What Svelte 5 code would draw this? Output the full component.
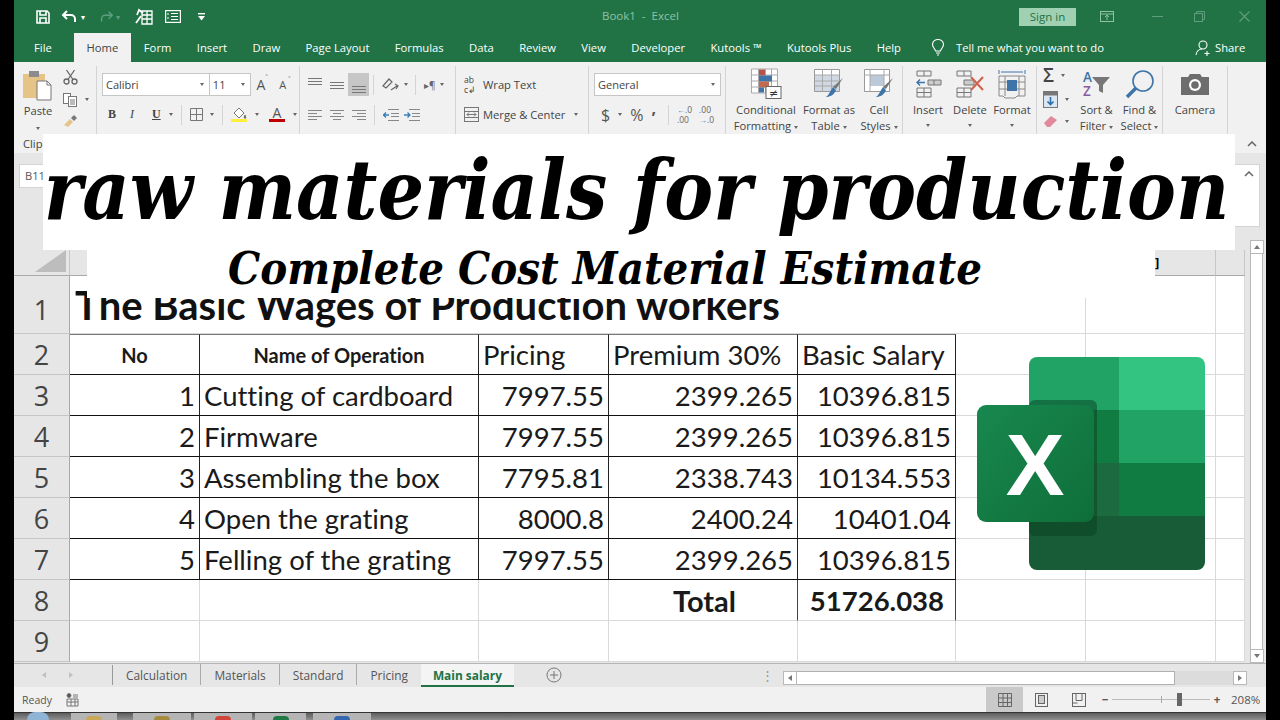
<script>
  const tabs = ['Form','Insert','Draw','Page Layout','Formulas','Data','Review','View','Developer','Kutools ™','Kutools Plus','Help'];
  const sheets = ['Calculation','Materials','Standard','Pricing'];
  const colHeads = ['A','B','C','D','E','F','G','H'];
  const rows = [
    ['1','Cutting of cardboard','7997.55','2399.265','10396.815'],
    ['2','Firmware','7997.55','2399.265','10396.815'],
    ['3','Assembling the box','7795.81','2338.743','10134.553'],
    ['4','Open the grating','8000.8','2400.24','10401.04'],
    ['5','Felling of the grating','7997.55','2399.265','10396.815']
  ];
</script>

<div class="screen">
  <div class="window">
    <header class="titlebar">
      <div class="qat">
        <svg width="16" height="16" viewBox="0 0 16 16" fill="none" stroke="#fff" stroke-width="1.6"><path d="M2 2h10l2 2v10H2z"/><path d="M5 2v4h6V2M5 14V9h6v5"/></svg>
        <svg class="q-undo" width="18" height="14" viewBox="0 0 18 14" fill="none" stroke="#fff" stroke-width="2"><path d="M6 1 2 5l4 4M2 5h8a4 4 0 0 1 4 4v3"/></svg>
        <span class="mini">▾</span>
        <svg class="q-redo" width="16" height="14" viewBox="0 0 18 14" fill="none" stroke="#5f9f80" stroke-width="1.6"><path d="M12 1l4 4-4 4M16 5H8a4 4 0 0 0-4 4v3"/></svg>
        <span class="mini dim">▾</span>
        <svg class="q-form" width="18" height="17" viewBox="0 0 18 17" fill="none" stroke="#fff" stroke-width="1.3"><path d="M7 3h10v13H7zM7 7h10M7 11h10M12 3v13"/><path d="M1 15 6 8M2 7l2-5 4 3" stroke-width="1.8"/></svg>
        <svg class="q-view" width="16" height="13" viewBox="0 0 16 13" fill="none" stroke="#fff" stroke-width="1.2"><rect x=".6" y=".6" width="14.8" height="11.8"/><path d="M6 3.5h7M6 6.5h7M6 9.5h7M2 4h2M2 8h2"/></svg>
        <svg class="q-more" width="7" height="8" viewBox="0 0 7 8" fill="#fff"><rect width="7" height="1.4"/><path d="M0 3h7L3.500 7.500z"/></svg>
      </div>
      <div class="doc">Book1&nbsp; -&nbsp; Excel</div>
      <div class="winctl">
        <span class="signin">Sign in</span>
        <svg width="14" height="11" viewBox="0 0 14 11" fill="none" stroke="#8fc2a5"><rect x=".5" y=".5" width="13" height="10"/><path d="M.5 3h13M7 9V4.500M5 6l2-2 2 2"/></svg>
        <svg class="w-min" width="11" height="2" viewBox="0 0 11 2"><rect width="11" height="1" fill="#5f9f80"/></svg>
        <svg class="w-max" width="11" height="11" viewBox="0 0 11 11" fill="none" stroke="#5f9f80"><rect x=".5" y="2.500" width="8" height="8"/><path d="M2.500 2.500v-2h8v8h-2"/></svg>
        <svg class="w-x" width="11" height="11" viewBox="0 0 11 11" stroke="#5f9f80" stroke-width="1.1"><path d="M.5.5l10 10M10.500.5l-10 10"/></svg>
      </div>
    </header>

    <nav class="tabbar">
      <span class="tab file">File</span>
      <span class="tab home">Home</span>
      {#each tabs as t}<span class="tab">{t}</span>{/each}
      <span class="tell">
        <svg width="14" height="17" viewBox="0 0 14 17" fill="none" stroke="#fff" stroke-width="1.1"><path d="M4.500 12C4 9.500 1.500 8.500 1.500 5.500a5.500 5 0 0 1 11 0c0 3-2.500 4-3 6.500zM5 14h4M6 16h2"/></svg>
        Tell me what you want to do
      </span>
      <span class="share">
        <svg width="17" height="16" viewBox="0 0 17 16" fill="none" stroke="#fff" stroke-width="1.1"><circle cx="8" cy="5" r="4"/><path d="M1 15c.5-3.500 3-6 6-6M12 11v5M9.500 13.500h5"/></svg>
        Share
      </span>
    </nav>

    <section class="ribbon">
      <div class="groups">
        <div class="group g-clip">
          <div class="big paste">
            <svg width="30" height="32" viewBox="0 0 30 32"><rect x="0" y="4" width="22" height="24" fill="#e6c488"/><rect x="6" y="1" width="10" height="6" fill="#8c8c8c"/><path d="M14 11h10l4 4v15H14z" fill="#fff" stroke="#777"/><path d="M24 11v4h4" fill="none" stroke="#777"/></svg>
            <span>Paste</span>
            <i class="chev"></i>
          </div>
          <div class="smallcol">
            <svg width="15" height="16" viewBox="0 0 15 16" fill="none" stroke="#666" stroke-width="1.3"><circle cx="3.500" cy="12.500" r="2.500"/><circle cx="11.500" cy="12.500" r="2.500"/><path d="M5 10.500 11.500 1M10 10.500 3.500 1"/></svg>
            <span class="ico-chev"><svg width="15" height="14" viewBox="0 0 15 14" fill="#fff" stroke="#777"><rect x=".5" y=".5" width="7" height="10"/><rect x="5.500" y="3.500" width="8" height="10"/><path d="M7 7h5M7 9h5M7 11h5" fill="none"/></svg><i class="chev"></i></span>
            <svg width="15" height="13" viewBox="0 0 15 13"><path d="M1 11 7 5l3 3-5 5z" fill="#e6c488"/><path d="M8 4l3-3 3 3-3 3z" fill="#777"/></svg>
          </div>
        </div>

        <div class="group g-font">
          <div class="line">
            <span class="select fontname">Calibri<i class="chev"></i></span>
            <span class="select fontsize">11<i class="chev"></i></span>
            <span class="growA">A<sup>˄</sup></span>
            <span class="growA small">A<sup>˅</sup></span>
          </div>
          <div class="line fmt">
            <b class="f-b">B</b><em class="f-i">I</em><u class="f-u">U</u><i class="chev"></i>
            <span class="vsep"></span>
            <svg width="13" height="13" viewBox="0 0 13 13" fill="none" stroke="#777"><path d="M.5.500h12v12H.5zM6.500.500v12M.5 6.500h12"/></svg><i class="chev"></i>
            <span class="vsep"></span>
            <span class="stack"><svg width="16" height="12" viewBox="0 0 16 12" fill="#fff" stroke="#777"><path d="M3 6 8 1l5 5-5 5z"/><path d="M14 8l1 3h-2z" fill="#777"/></svg><span class="swatch yellow"></span></span><i class="chev"></i>
            <span class="stack colorA">A<span class="swatch red"></span></span><i class="chev"></i>
          </div>
        </div>

        <div class="group g-align">
          <div class="line">
            <svg class="al top" width="14" height="7" viewBox="0 0 14 7" stroke="#777"><path d="M0 .5h14M0 3.500h14M0 6.500h14"/></svg>
            <svg class="al mid" width="14" height="7" viewBox="0 0 14 7" stroke="#777"><path d="M0 .5h14M0 3.500h14M0 6.500h14"/></svg>
            <span class="pressed"><svg width="14" height="7" viewBox="0 0 14 7" stroke="#777"><path d="M0 .5h14M0 3.500h14M0 6.500h14"/></svg></span>
            <span class="vsep"></span>
            <svg width="18" height="14" viewBox="0 0 18 14" fill="none" stroke="#666" stroke-width="1.2"><path d="M1 8 7 1l3 3-6 6zM9 12l6-4M13 6l3 2-2 3"/></svg><i class="chev"></i>
            <span class="vsep"></span>
            <span class="indentd">▸¶</span><i class="chev"></i>
          </div>
          <div class="line">
            <svg class="al" width="14" height="10" viewBox="0 0 14 10" stroke="#888"><path d="M0 .5h14M0 3.500h9M0 6.500h14M0 9.500h9"/></svg>
            <svg class="al" width="14" height="10" viewBox="0 0 14 10" stroke="#888"><path d="M0 .5h14M3 3.500h8M0 6.500h14M3 9.500h8"/></svg>
            <svg class="al" width="14" height="10" viewBox="0 0 14 10" stroke="#888"><path d="M0 .5h14M5 3.500h9M0 6.500h14M5 9.500h9"/></svg>
            <span class="vsep"></span>
            <svg width="16" height="12" viewBox="0 0 16 12" fill="none" stroke="#888"><path d="M5 .5h11M8 4.500h8M8 7.500h8M5 11.500h11"/><path d="M6 6H0M3 3.500 .5 6 3 8.500" stroke="#3a7fb5" stroke-width="1.300"/></svg>
            <svg class="ind2" width="16" height="12" viewBox="0 0 16 12" fill="none" stroke="#888"><path d="M5 .5h11M8 4.500h8M8 7.500h8M5 11.500h11"/><path d="M0 6h6M3.500 3.500 6 6 3.500 8.500" stroke="#3a7fb5" stroke-width="1.300"/></svg>
          </div>
        </div>

        <div class="group g-wrap">
          <div class="line"><span class="abc">ab<br/>c↲</span><span class="lbl">Wrap Text</span></div>
          <div class="line"><svg width="15" height="15" viewBox="0 0 15 15" fill="none" stroke="#777"><rect x=".5" y=".5" width="14" height="14"/><path d="M.5 4.500h14M.5 10.500h14M3 7.500h9M5 5.500l-2 2 2 2M10 5.500l2 2-2 2"/></svg><span class="lbl">Merge &amp; Center</span><i class="chev merge"></i></div>
        </div>

        <div class="group g-num">
          <div class="line"><span class="select general">General<i class="chev"></i></span></div>
          <div class="line numfmt">
            <span class="sym">$</span><i class="chev"></i><span class="sym pct">%</span><span class="sym comma">,</span><span class="vsep"></span>
            <span class="dec"><b>←</b>.0<br/>.00</span><span class="dec two">.00<br/><b>→</b>.0</span>
          </div>
        </div>

        <div class="group g-styles">
          <div class="big w-cond">
            <svg width="31" height="31" viewBox="0 0 31 31"><path d="M.5.5h26v24H.5zM.5 6.500h26M.5 12.500h26M.5 18.500h26M7.500.5v24M14.500.5v24M20.500.5v24" fill="#fff" stroke="#aaa"/><rect x="8" y="1" width="6" height="6" fill="#b5534a"/><rect x="8" y="7" width="13" height="6" fill="#3e74a8"/><rect x="8" y="13" width="10" height="6" fill="#c46a50"/><rect x="8" y="19" width="5" height="5" fill="#3e74a8"/><rect x="15" y="18" width="15" height="12" fill="#fff" stroke="#666"/><text x="22.500" y="28" class="ne">≠</text></svg>
            <span>Conditional</span><span class="tw">Formatting<i class="chev"></i></span>
          </div>
          <div class="big w-tbl">
            <svg width="30" height="30" viewBox="0 0 30 30"><path d="M.5.5h25v22H.5z" fill="#fff" stroke="#999"/><rect x="1" y="6" width="24" height="16" fill="#cfd8e3"/><path d="M.5 6h25M.5 12h25M.5 17h25M8.500.5v22M17.500.5v22" stroke="#aaa" fill="none"/><path d="M29 9 22 20l-3-2z" fill="#777"/><path d="M19 18l3 3c-2 5-6 7-10 7 3-2 4-6 7-10z" fill="#3e74a8"/></svg>
            <span>Format as</span><span class="tw">Table<i class="chev"></i></span>
          </div>
          <div class="big w-cell">
            <svg width="30" height="30" viewBox="0 0 30 30"><path d="M.5.5h25v22H.5z" fill="#fff" stroke="#999"/><rect x="6" y="6" width="14" height="11" fill="#bcc9d8"/><path d="M.5 6h25M6 .5v22M20 .5v22" stroke="#aaa" fill="none"/><path d="M29 9 22 20l-3-2z" fill="#777"/><path d="M19 18l3 3c-2 5-6 7-10 7 3-2 4-6 7-10z" fill="#3e74a8"/></svg>
            <span>Cell</span><span class="tw">Styles<i class="chev"></i></span>
          </div>
        </div>

        <div class="group g-cells">
          <div class="big w-cellbtn">
            <svg width="28" height="28" viewBox="0 0 28 28" fill="none" stroke="#777"><path d="M3 1h14v5H3zM10 1v5M3 18h14v9H3zM3 22.500h14M10 18v9"/><path d="M14 10h13v5H14zM20 10v5" fill="#ccc"/><path d="M11 12.500H3M6 9.500l-3 3 3 3" stroke="#3e74a8" stroke-width="1.400"/></svg>
            <span>Insert</span><i class="chev"></i>
          </div>
          <div class="big w-cellbtn">
            <svg width="30" height="28" viewBox="0 0 30 28" fill="none" stroke="#777"><path d="M2 1h14v5H2zM9 1v5M2 18h14v9H2zM2 22.500h14M9 18v9"/><path d="M9 10h10v5H9z" fill="#ccc"/><path d="M16 7l12 13M28 7 16 20" stroke="#d0604a" stroke-width="2"/></svg>
            <span>Delete</span><i class="chev"></i>
          </div>
          <div class="big w-cellbtn">
            <svg width="28" height="30" viewBox="0 0 28 30" fill="none" stroke="#888"><path d="M1 1v4M27 1v4M3 3h22" stroke="#3e74a8"/><path d="M1 7h26v20h-8l-2 2H7l-2-2H1zM7 7v20M21 7v20M1 13h26M1 20h26"/><rect x="9" y="11" width="10" height="11" fill="#3e74a8" stroke="none"/></svg>
            <span>Format</span><i class="chev"></i>
          </div>
        </div>

        <div class="group g-edit">
          <div class="smallcol edit">
            <span class="ico-chev"><span class="sigma">Σ</span><i class="chev"></i></span>
            <span class="ico-chev"><svg width="15" height="17" viewBox="0 0 15 17"><rect x=".5" y=".5" width="14" height="16" fill="#dbe6f1" stroke="#777"/><rect x=".5" y=".5" width="14" height="4" fill="#777"/><path d="M7.500 6v7M4.500 10.500l3 3 3-3" fill="none" stroke="#2c6ea8" stroke-width="1.600"/></svg><i class="chev"></i></span>
            <span class="ico-chev"><svg width="15" height="13" viewBox="0 0 15 13"><path d="M1 8 8 1l6 4-7 7H4z" fill="#e08a9c"/></svg><i class="chev"></i></span>
          </div>
          <div class="big w-sort">
            <span class="az"><span class="az-t">A<br/><em>Z</em></span><svg class="funnel" width="18" height="18" viewBox="0 0 18 18"><path d="M0 1h18l-7 8v8l-4-2V9z" fill="#777"/></svg></span>
            <span>Sort &amp;</span><span class="tw">Filter<i class="chev"></i></span>
          </div>
          <div class="big w-find">
            <svg width="30" height="30" viewBox="0 0 30 30" fill="none"><circle cx="18" cy="12" r="10" stroke="#3e74a8" stroke-width="1.600"/><path d="M11 19 2 28" stroke="#3e74a8" stroke-width="3.500"/></svg>
            <span>Find &amp;</span><span class="tw">Select<i class="chev"></i></span>
          </div>
        </div>

        <div class="group g-cam">
          <div class="big w-camera">
            <svg width="28" height="22" viewBox="0 0 28 22"><path d="M0 4h7l2-3h10l2 3h7v18H0z" fill="#6d6d6d"/><circle cx="14" cy="12" r="6" fill="#fff"/><circle cx="14" cy="12" r="3.800" fill="#6d6d6d"/></svg>
            <span>Camera</span>
          </div>
        </div>
      </div>
      <div class="labels"><span>Clip</span><svg width="10" height="6" viewBox="0 0 10 6" fill="none" stroke="#666" stroke-width="1.500"><path d="M1 5l4-4 4 4"/></svg></div>
    </section>

    <section class="formula">
      <span class="namebox">B11</span>
      <span class="formbox"><svg width="10" height="6" viewBox="0 0 10 6" fill="none" stroke="#666" stroke-width="1.500"><path d="M1 5l4-4 4 4"/></svg></span>
    </section>

    <main class="body">
      <div class="sheet">
        <div class="corner"><span class="tri"></span></div>
        {#each colHeads as c, i}<div class="colhead">{#if i === 6}<b class="stray">]</b>{/if}</div>{/each}

        <div class="rowhead r1">1</div>
        <div class="cell title"><span>The Basic Wages of Production workers</span></div>
        <div class="cell"></div><div class="cell"></div>

        <div class="rowhead">2</div>
        <div class="cell tb tt hd">No</div>
        <div class="cell tb tt hd">Name of Operation</div>
        <div class="cell tb tt left">Pricing</div>
        <div class="cell tb tt left">Premium 30%</div>
        <div class="cell tb tt left">Basic Salary</div>
        <div class="cell"></div><div class="cell"></div><div class="cell"></div>

        {#each rows as r, i}
          <div class="rowhead">{i + 3}</div>
          <div class="cell tb num">{r[0]}</div>
          <div class="cell tb left">{r[1]}</div>
          <div class="cell tb num">{r[2]}</div>
          <div class="cell tb num">{r[3]}</div>
          <div class="cell tb num">{r[4]}</div>
          <div class="cell"></div><div class="cell"></div><div class="cell"></div>
        {/each}

        <div class="rowhead">8</div>
        <div class="cell"></div><div class="cell"></div><div class="cell"></div>
        <div class="cell vb total">Total</div>
        <div class="cell vb totalv">51726.038</div>
        <div class="cell"></div><div class="cell"></div><div class="cell"></div>

        <div class="rowhead">9</div>
        <div class="cell"></div><div class="cell"></div><div class="cell"></div><div class="cell"></div>
        <div class="cell"></div><div class="cell"></div><div class="cell"></div><div class="cell"></div>

        <div class="logo">
          <svg width="229" height="214" viewBox="0 0 229 214">
            <defs><clipPath id="back"><rect x="52" y="0" width="176" height="213" rx="8"/></clipPath>
            <linearGradient id="fr" x1="0" y1="0" x2="1" y2="1"><stop offset="0" stop-color="#18884f"/><stop offset="1" stop-color="#0f6e3a"/></linearGradient></defs>
            <g clip-path="url(#back)">
              <rect x="52" y="0" width="90" height="53" fill="#21a366"/>
              <rect x="142" y="0" width="86" height="53" fill="#33c481"/>
              <rect x="52" y="53" width="90" height="53" fill="#107c41"/>
              <rect x="142" y="53" width="86" height="53" fill="#21a366"/>
              <rect x="52" y="106" width="90" height="53" fill="#1c6a3f"/>
              <rect x="142" y="106" width="86" height="53" fill="#107c41"/>
              <rect x="52" y="159" width="176" height="54" fill="#185c37"/>
              <rect x="52" y="43" width="68" height="136" rx="6" fill="#07401f" opacity=".5"/>
            </g>
            <rect x="0" y="48" width="117" height="117" rx="9" fill="url(#fr)"/>
            <text x="58" y="138" class="logo-x">X</text>
          </svg>
        </div>
      </div>
      <aside class="vscroll">
        <span class="sbtn"><i class="up"></i></span>
        <span class="vtrack"></span>
        <span class="sbtn"><i class="down"></i></span>
      </aside>
    </main>

    <footer class="sheetbar">
      <span class="navs"><i class="l"></i><i class="r"></i></span>
      {#each sheets as s}<span class="stab">{s}</span>{/each}
      <span class="stab active">Main salary</span>
      <svg class="addsheet" width="16" height="16" viewBox="0 0 16 16" fill="none" stroke="#777"><circle cx="8" cy="8" r="7"/><path d="M8 4v8M4 8h8"/></svg>
      <span class="dots">⋮</span>
      <span class="hscroll">
        <span class="sbtn h"><i class="l"></i></span>
        <span class="hthumb"></span>
        <span class="htrack"></span>
        <span class="sbtn h"><i class="r"></i></span>
      </span>
    </footer>

    <footer class="status">
      <span class="ready">Ready</span>
      <svg width="13" height="14" viewBox="0 0 13 14" fill="none" stroke="#777"><circle cx="3" cy="2.500" r="2" fill="#555"/><path d="M1 6h11v7H1zM1 9h11M5 6v7M9 6v7M7 2h5M7 4h5"/></svg>
      <span class="views">
        <span class="view on"><svg width="14" height="14" viewBox="0 0 14 14" fill="none" stroke="#666"><path d="M.5.500h13v13H.5zM5 .5v13M9.500.5v13M.5 5h13M.5 9.500h13"/></svg></span>
        <span class="view"><svg width="13" height="14" viewBox="0 0 13 14" fill="none" stroke="#666"><rect x=".5" y=".5" width="12" height="13"/><rect x="3.500" y="2.500" width="6" height="8" fill="#ccc"/></svg></span>
        <span class="view"><svg width="14" height="14" viewBox="0 0 14 14" fill="none" stroke="#666"><rect x=".5" y=".5" width="13" height="13"/><path d="M4 .5v7h6v-7M.5 10h5"/></svg></span>
      </span>
      <span class="zoom">
        <b>−</b>
        <span class="slider"><i class="tick"></i><i class="thumb"></i></span>
        <b>+</b>
        <span class="zpct">208%</span>
      </span>
    </footer>

    <div class="taskbar">
      <span class="orb"></span>
      <span class="tb-btn w50"><i class="tip gold"></i></span>
      <span class="tb-btn w58 gap"><i class="tip gold2"></i></span>
      <span class="tb-btn w58"><i class="tip chrome"></i></span>
      <span class="tb-btn w54"><i class="tip xl"></i></span>
      <span class="tb-btn w58 gap2"><i class="tip blue"></i></span>
    </div>

    <div class="banner one"><span>raw materials for production</span></div>
    <div class="banner two"><span>Complete Cost Material Estimate</span></div>
  </div>
</div>

<style>
  :global(body) { margin: 0; background: #000; }
  .screen { width: 1280px; height: 720px; background: #000; overflow: hidden; }
  .window {
    position: relative; width: 1252px; height: 720px; margin-left: 14px;
    display: flex; flex-direction: column; overflow: hidden;
    font-family: "Open Sans", "Noto Sans", sans-serif; font-size: 11.200px; color: #444; background: #e6e6e6;
  }
  i { display: inline-block; font-style: normal; }

  .titlebar { height: 33px; flex: none; background: #217346; display: flex; align-items: center; position: relative; }
  .qat { display: flex; align-items: center; padding-left: 21px; color: #fff; }
  .q-undo { margin-left: 10px; }
  .mini { font-size: 8px; margin-left: 2px; width: 8px; }
  .dim { color: #5f9f80; }
  .q-redo { margin-left: 9px; }
  .q-form { margin-left: 11px; }
  .q-view { margin-left: 12px; }
  .q-more { margin-left: 17px; }
  .doc { position: absolute; left: 588px; top: 8px; font-size: 11.500px; color: #8fc2a5; }
  .winctl { margin-left: auto; display: flex; align-items: center; padding-right: 16px; }
  .signin { width: 57px; height: 18px; background: #9fd0b2; color: #217346; text-align: center; line-height: 18px; font-size: 11.500px; margin-right: 24px; }
  .w-min { margin-left: 38px; }
  .w-max { margin-left: 31px; }
  .w-x { margin-left: 34px; }

  .tabbar { height: 29px; flex: none; background: #217346; display: flex; align-items: stretch; color: #fff; font-size: 11.250px; position: relative; }
  .tab { display: flex; align-items: center; padding: 0 12.700px; white-space: nowrap; }
  .file { padding: 0 13px 0 20px; margin-right: 9px; }
  .home { background: #f1f1f1; color: #444; padding: 0 12px; width: 33px; justify-content: center; }
  .home + .tab { padding-left: 13px; }
  .tell { position: absolute; left: 917px; top: 0; height: 29px; display: flex; align-items: center; gap: 11px; }
  .share { position: absolute; left: 1181px; top: 0; height: 29px; display: flex; align-items: center; gap: 3px; }

  .ribbon { height: 91px; flex: none; background: #f1f1f1; display: flex; flex-direction: column; }
  .groups { height: 72px; display: flex; }
  .group { flex: none; height: 68px; margin-top: 4px; border-right: 1px solid #d4d4d4; box-sizing: border-box; }
  .labels { display: flex; justify-content: space-between; align-items: center; height: 19px; padding: 0 9px; }
  .big { display: flex; flex-direction: column; align-items: center; line-height: 16px; white-space: nowrap; flex: none; }
  .big svg { height: 32px; flex: none; }
  .big > span { display: block; }
  .chev { width: 0; height: 0; border-left: 2.500px solid transparent; border-right: 2.500px solid transparent; border-top: 3px solid #666; vertical-align: middle; }
  .tw .chev { margin-left: 3px; }
  .line { display: flex; align-items: center; height: 23px; white-space: nowrap; }
  .vsep { width: 1px; height: 20px; background: #d4d4d4; flex: none; }

  .g-clip { width: 83px; display: flex; padding-left: 9px; }
  .paste { width: 30px; padding-top: 4px; }
  .paste svg { width: 30px; height: 32px; margin-bottom: 1px; }
  .paste .chev { margin-top: 8px; }
  .smallcol { display: flex; flex-direction: column; align-items: flex-start; justify-content: space-between; height: 58px; padding: 3px 0 3px 10px; }
  .ico-chev { display: flex; align-items: center; gap: 7px; }

  .g-font { width: 203px; padding: 7px 0 0 5px; display: flex; flex-direction: column; gap: 7px; }
  .select { height: 21px; border: 1px solid #c6c6c6; background: #fff; box-sizing: content-box; display: flex; align-items: center; justify-content: space-between; padding: 0 5px 0 3px; font-size: 11px; }
  .fontname { width: 99px; }
  .fontsize { width: 33px; margin-left: -1px; padding-right: 5px; }
  .growA { font-size: 14px; margin-left: 5px; width: 20px; color: #555; position: relative; }
  .growA.small { font-size: 11px; margin-left: 3px; }
  .growA sup { font-size: 8px; position: absolute; top: -3px; left: 9px; color: #555; }
  .fmt { padding-left: 6px; gap: 0; }
  .f-b { font-family: "Liberation Serif", serif; font-size: 12px; width: 22px; }
  .f-i { font-family: "Liberation Serif", serif; font-size: 12px; width: 22px; }
  .f-u { font-family: "Liberation Serif", serif; font-size: 12px; width: 16px; font-weight: 700; }
  .fmt .vsep { margin: 0 8px 0 8px; }
  .fmt svg + .chev { margin-left: 7px; }
  .fmt .chev { margin-left: 1px; }
  .stack { position: relative; display: inline-flex; flex-direction: column; align-items: center; width: 16px; margin-right: 7px; }
  .swatch { width: 16px; height: 3px; display: block; }
  .yellow { background: #ffef3c; }
  .red { background: #c00000; }
  .colorA { font-size: 14px; line-height: 12px; margin-left: 10px; color: #555; }

  .g-align { width: 156px; padding: 7px 0 0 8px; display: flex; flex-direction: column; gap: 7px; }
  .al { margin-right: 8px; flex: none; }
  .al.top { margin-bottom: 6px; }
  .al.mid { margin-top: 2px; }
  .pressed { width: 21px; height: 23px; background: #c6c6c6; display: flex; align-items: flex-end; justify-content: center; padding-bottom: 3px; box-sizing: border-box; margin-right: 4px; margin-left: -4px; }
  .g-align .vsep + svg { margin-left: 8px; }
  .g-align .chev { margin-left: 4px; margin-right: 7px; }
  .indentd { margin-left: 8px; color: #666; font-size: 10px; }
  .ind2 { margin-left: 5px; }

  .g-wrap { width: 133px; padding: 7px 0 0 8px; display: flex; flex-direction: column; gap: 7px; }
  .abc { font-size: 8.500px; line-height: 10px; width: 15px; }
  .lbl { margin-left: 4px; }
  .chev.merge { margin-left: 9px; }

  .g-num { width: 137px; padding: 7px 0 0 5px; display: flex; flex-direction: column; gap: 7px; }
  .general { width: 117px; padding-right: 5px; }
  .numfmt { padding-left: 7px; }
  .sym { font-size: 16px; color: #555; }
  .numfmt .chev { margin-left: 8px; }
  .pct { margin-left: 8px; }
  .comma { margin-left: 8px; font-weight: 700; margin-right: 12px; margin-top: -14px; }
  .dec { font-size: 8.500px; line-height: 10px; margin-left: 8px; color: #666; white-space: nowrap; }
  .dec b { color: #3a7fb5; font-size: 8px; }
  .dec.two { margin-left: 7px; }

  .g-styles { width: 177px; display: flex; padding-left: 6px; }
  .g-styles .big { padding-top: 2px; }
  .w-cond { width: 68px; }
  .w-tbl { width: 58px; }
  .w-cell { width: 40px; margin-left: 1px; }
  .ne { font-size: 11px; text-anchor: middle; fill: #333; font-family: "DejaVu Sans", sans-serif; }
  .g-styles .big svg { margin-bottom: 2px; height: 32px; }

  .g-cells { width: 134px; display: flex; padding-left: 4px; }
  .w-cellbtn { width: 42px; padding-top: 2px; }
  .w-cellbtn svg { margin-bottom: 2px; }
  .w-cellbtn .chev { margin-top: 6px; }

  .g-edit { width: 126px; display: flex; padding-left: 6px; }
  .smallcol.edit { padding: 0; height: 62px; }
  .sigma { font-size: 19px; font-weight: 600; line-height: 18px; color: #444; }
  .w-sort { width: 43px; margin-left: 6px; padding-top: 2px; }
  .big > .az { display: flex; height: 32px; margin-bottom: 2px; align-items: center; gap: 0; }
  .big .funnel { height: 18px; margin-top: 2px; }
  .az-t { font-size: 13.500px; line-height: 14px; color: #3e74a8; font-weight: 600; }
  .az-t em { color: #8a5a9e; font-style: normal; }
  .w-find { width: 43px; padding-top: 2px; }
  .w-find svg { margin-bottom: 2px; }
  .g-cam { width: 65px; display: flex; justify-content: center; }
  .w-camera { padding-top: 2px; }
  .w-camera svg { height: 32px; margin-bottom: 2px; }

  .formula { height: 87px; flex: none; background: #e6e6e6; position: relative; display: flex; padding-top: 11px; box-sizing: border-box; }
  .namebox { margin-left: 5px; width: 70px; height: 22px; line-height: 22px; background: #fff; border: 1px solid #d4d4d4; padding-left: 5px; color: #555; }
  .formbox { margin-left: auto; margin-right: 6px; width: 300px; height: 63px; background: #fff; border: 1px solid #d4d4d4; box-sizing: border-box; display: flex; justify-content: flex-end; padding: 6px 5px; }

  .body { height: 423px; flex: none; display: flex; }
  .sheet {
    position: relative; width: 1233px; flex: none; padding-top: 10px; background: #e6e6e6;
    display: grid; grid-template-columns: 56px 130px 279px 130px 189px 158px 130px 130px 29px;
    grid-template-rows: 26px 58px repeat(8, 41px); overflow: hidden;
  }
  .corner, .colhead { background: #e6e6e6; border-bottom: 1px solid #a9a9a9; border-right: 1px solid #c6c6c6; box-sizing: border-box; position: relative; }
  .tri { position: absolute; right: 3px; bottom: 3px; border-style: solid; border-width: 0 0 22px 31px; border-color: transparent transparent #bdbdbd transparent; }
  .stray { position: absolute; left: 69px; top: 3px; color: #000; font-size: 13px; font-family: "Open Sans", sans-serif; }
  .rowhead { background: #e6e6e6; border-right: 1px solid #a9a9a9; border-bottom: 1px solid #c6c6c6; box-sizing: border-box; font-size: 27px; color: #444; display: flex; align-items: center; justify-content: center; }
  .rowhead.r1 { padding-top: 10px; }

  .cell { background: #fff; border-right: 1px solid #d9d9d9; border-bottom: 1px solid #d9d9d9; box-sizing: border-box; font-family: Lato, "Liberation Sans", sans-serif; font-variant-ligatures: none; font-size: 27.500px; color: #1a1a1a; display: flex; align-items: center; white-space: nowrap; padding: 0 4px; min-width: 0; }
  .title { grid-column: span 6; font-weight: 700; font-size: 40px; line-height: 46px; color: #111; align-items: flex-end; padding: 0 0 5px 5px; overflow: hidden; }
  .tb { border-right: 1px solid #222; border-bottom: 1px solid #111; }
  .tt { border-top: 1px solid #777; }
  .vb { border-right: 1px solid #444; }
  .hd { font-size: 20px; font-weight: 700; justify-content: center; }
  .left { justify-content: flex-start; }
  .num { justify-content: flex-end; }
  .total { justify-content: flex-end; font-weight: 700; font-size: 29px; padding-right: 61px; grid-column: 5; }
  .totalv { justify-content: flex-end; font-weight: 700; padding-right: 11px; }

  .logo { position: absolute; left: 963px; top: 117px; line-height: 0; }
  .logo-x { font-family: "Liberation Sans", sans-serif; font-weight: 700; font-size: 88px; fill: #fff; text-anchor: middle; }

  .vscroll { width: 19px; flex: none; background: #e6e6e6; display: flex; flex-direction: column; align-items: center; }
  .sbtn { width: 14px; height: 14px; background: #fff; border: 1px solid #b9b9b9; box-sizing: border-box; flex: none; display: flex; align-items: center; justify-content: center; }
  .vtrack { flex: 1; width: 13px; background: #fff; border: 1px solid #b9b9b9; border-width: 0 1px; box-sizing: border-box; }
  .up { border-left: 3.500px solid transparent; border-right: 3.500px solid transparent; border-bottom: 4px solid #777; }
  .down { border-left: 3.500px solid transparent; border-right: 3.500px solid transparent; border-top: 4px solid #777; }
  .l { border-top: 3.500px solid transparent; border-bottom: 3.500px solid transparent; border-right: 4px solid #777; }
  .r { border-top: 3.500px solid transparent; border-bottom: 3.500px solid transparent; border-left: 4px solid #777; }

  .sheetbar { height: 24px; flex: none; background: #e6e6e6; border-top: 1px solid #b5b5b5; box-sizing: border-box; display: flex; align-items: stretch; font-size: 11.900px; position: relative; }
  .navs { width: 99px; display: flex; align-items: center; gap: 23px; padding-left: 28px; box-sizing: border-box; border-right: 1px solid #999; margin: 1px 0 2px; }
  .navs i { opacity: .35; }
  .stab { display: flex; align-items: center; padding: 0 13px; border-right: 1px solid #aaa; margin-bottom: 2px; color: #555; }
  .stab.active { background: #f4f4f4; color: #217346; font-weight: 700; margin: 0 0 0 -1px; border: 0; border-bottom: 2px solid #217346; width: 93px; box-sizing: border-box; justify-content: center; padding: 0; height: 23px; }
  .addsheet { align-self: center; margin-left: 32px; margin-top: -2px; }
  .dots { position: absolute; left: 747px; top: 2px; color: #999; font-size: 13px; }
  .hscroll { position: absolute; left: 769px; top: 7px; display: flex; width: 464px; height: 14px; }
  .sbtn.h { width: 14px; }
  .hthumb { width: 378px; background: #fff; border: 1px solid #b0b0b0; border-left: 0; box-sizing: border-box; }
  .htrack { flex: 1; background: #dcdcdc; }

  .status { height: 25px; flex: none; background: #f1f1f1; display: flex; align-items: center; font-size: 10.500px; color: #555; position: relative; }
  .ready { margin-left: 8px; margin-right: 14px; }
  .views { position: absolute; left: 972px; top: 0; height: 25px; display: flex; }
  .view { width: 37px; height: 25px; display: flex; align-items: center; justify-content: center; }
  .view.on { background: #c9c9c9; }
  .zoom { position: absolute; left: 1087px; top: 0; height: 25px; display: flex; align-items: center; font-size: 11.500px; }
  .zoom b { width: 8px; text-align: center; }
  .slider { position: relative; width: 98px; height: 1px; background: #bbb; margin: 0 3px; }
  .tick { position: absolute; left: 49px; top: -3px; width: 1px; height: 7px; background: #aaa; }
  .thumb { position: absolute; left: 65px; top: -6px; width: 5px; height: 13px; background: #666; }
  .zpct { margin-left: 10px; }

  .taskbar { height: 8px; flex: none; background: linear-gradient(#5d5d5d, #8f8f8f); display: flex; align-items: flex-end; border-top: 1px solid #333; box-sizing: border-box; }
  .orb { width: 22px; height: 8px; border-radius: 11px 11px 0 0; background: #8fb4d6; margin-left: 13px; }
  .tb-btn { height: 7px; background: #b5b5b5; margin-left: 3px; position: relative; display: flex; justify-content: center; }
  .w50 { width: 46px; margin-left: 22px; }
  .w58 { width: 58px; }
  .w54 { width: 51px; }
  .gap { margin-left: 16px; }
  .gap2 { margin-left: 7px; }
  .tip { width: 16px; height: 4px; align-self: flex-end; border-radius: 6px 6px 0 0; }
  .gold { background: #c9a85a; }
  .gold2 { background: #a68b3e; }
  .chrome { background: #d2453a; }
  .xl { background: #1f7a45; }
  .blue { background: #3566b0; }

  .banner { position: absolute; background: #fff; display: flex; align-items: flex-start; justify-content: center; font-family: "DejaVu Serif", serif; font-stretch: condensed; font-style: italic; font-weight: 700; color: #000; white-space: nowrap; }
  .banner.one { left: 29px; top: 134px; width: 1187px; padding-right: 5px; height: 116px; font-size: 81.500px; line-height: 112px; }
  .banner.two { left: 73px; top: 250px; width: 1036px; padding-right: 32px; height: 48px; font-size: 45px; line-height: 38px; }
</style>
